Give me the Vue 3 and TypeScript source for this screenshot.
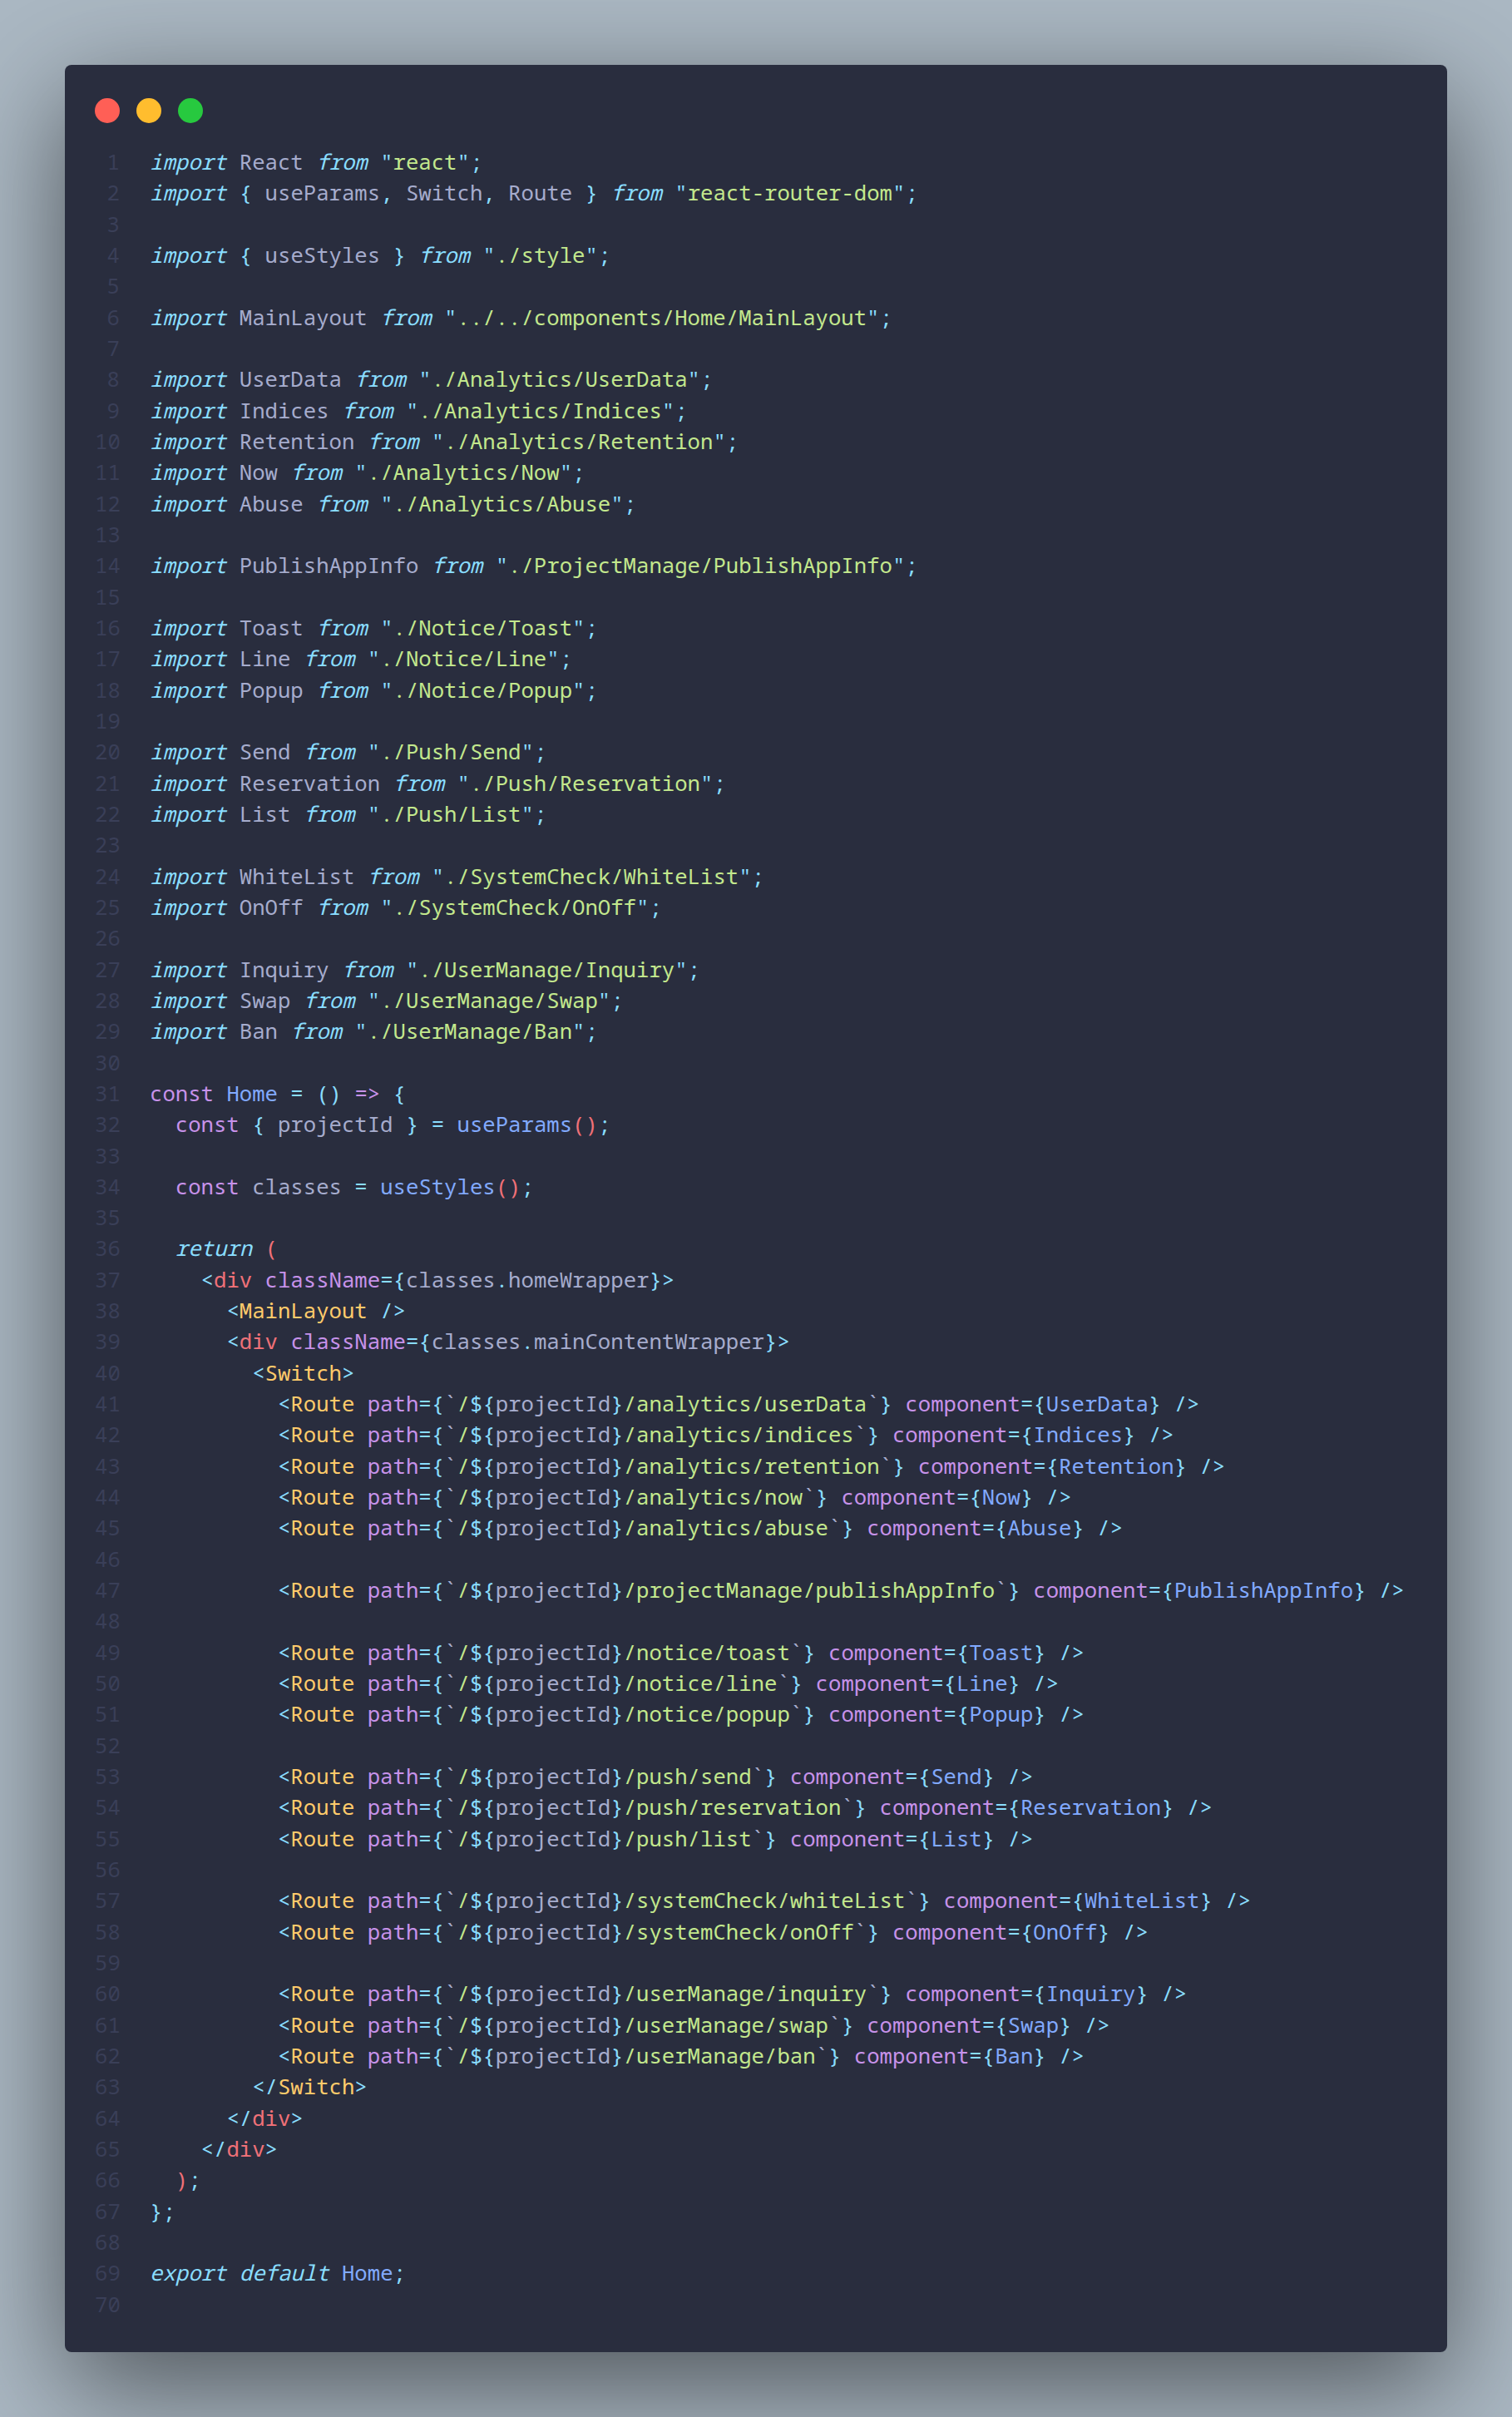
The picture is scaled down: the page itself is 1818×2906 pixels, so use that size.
<script setup lang="ts">
type Tok = [string, string]
type Line = Tok[]

const imp = (name: string, path: string): Line => [
  ['k', 'import'], ['f', ` ${name} `], ['k', 'from'], ['f', ' '], ['c', '"'], ['g', path], ['c', '"'], ['c', ';'],
]
const impBrace = (names: Tok[], path: string): Line => [
  ['k', 'import'], ['f', ' '], ['c', '{'], ['f', ' '], ...names, ['f', ' '], ['c', '}'], ['f', ' '],
  ['k', 'from'], ['f', ' '], ['c', '"'], ['g', path], ['c', '"'], ['c', ';'],
]
const route = (path: string, comp: string): Line => [
  ['f', '          '], ['c', '<'], ['y', 'Route'], ['f', ' '], ['p', 'path'], ['c', '={'], ['f', '`'], ['g', '/'], ['c', '${'],
  ['f', 'projectId'], ['c', '}'], ['g', path], ['f', '`'], ['c', '}'], ['f', ' '], ['p', 'component'], ['c', '={'], ['b', comp], ['c', '}'],
  ['f', ' '], ['c', '/>'],
]
const blank: Line = []

const lines: Line[] = [
  imp('React', 'react'),
  impBrace([['f', 'useParams'], ['c', ','], ['f', ' Switch'], ['c', ','], ['f', ' Route']], 'react-router-dom'),
  blank,
  impBrace([['f', 'useStyles']], './style'),
  blank,
  imp('MainLayout', '../../components/Home/MainLayout'),
  blank,
  imp('UserData', './Analytics/UserData'),
  imp('Indices', './Analytics/Indices'),
  imp('Retention', './Analytics/Retention'),
  imp('Now', './Analytics/Now'),
  imp('Abuse', './Analytics/Abuse'),
  blank,
  imp('PublishAppInfo', './ProjectManage/PublishAppInfo'),
  blank,
  imp('Toast', './Notice/Toast'),
  imp('Line', './Notice/Line'),
  imp('Popup', './Notice/Popup'),
  blank,
  imp('Send', './Push/Send'),
  imp('Reservation', './Push/Reservation'),
  imp('List', './Push/List'),
  blank,
  imp('WhiteList', './SystemCheck/WhiteList'),
  imp('OnOff', './SystemCheck/OnOff'),
  blank,
  imp('Inquiry', './UserManage/Inquiry'),
  imp('Swap', './UserManage/Swap'),
  imp('Ban', './UserManage/Ban'),
  blank,
  [['p', 'const'], ['f', ' '], ['b', 'Home'], ['f', ' '], ['c', '='], ['f', ' '], ['c', '()'], ['f', ' '], ['p', '=>'], ['f', ' '], ['c', '{']],
  [['f', '  '], ['p', 'const'], ['f', ' '], ['c', '{'], ['f', ' projectId '], ['c', '}'], ['f', ' '], ['c', '='], ['f', ' '], ['b', 'useParams'], ['r', '()'], ['c', ';']],
  blank,
  [['f', '  '], ['p', 'const'], ['f', ' classes '], ['c', '='], ['f', ' '], ['b', 'useStyles'], ['r', '()'], ['c', ';']],
  blank,
  [['f', '  '], ['k', 'return'], ['f', ' '], ['r', '(']],
  [['f', '    '], ['c', '<'], ['r', 'div'], ['f', ' '], ['p', 'className'], ['c', '={'], ['f', 'classes'], ['c', '.'], ['f', 'homeWrapper'], ['c', '}>']],
  [['f', '      '], ['c', '<'], ['y', 'MainLayout'], ['f', ' '], ['c', '/>']],
  [['f', '      '], ['c', '<'], ['r', 'div'], ['f', ' '], ['p', 'className'], ['c', '={'], ['f', 'classes'], ['c', '.'], ['f', 'mainContentWrapper'], ['c', '}>']],
  [['f', '        '], ['c', '<'], ['y', 'Switch'], ['c', '>']],
  route('/analytics/userData', 'UserData'),
  route('/analytics/indices', 'Indices'),
  route('/analytics/retention', 'Retention'),
  route('/analytics/now', 'Now'),
  route('/analytics/abuse', 'Abuse'),
  blank,
  route('/projectManage/publishAppInfo', 'PublishAppInfo'),
  blank,
  route('/notice/toast', 'Toast'),
  route('/notice/line', 'Line'),
  route('/notice/popup', 'Popup'),
  blank,
  route('/push/send', 'Send'),
  route('/push/reservation', 'Reservation'),
  route('/push/list', 'List'),
  blank,
  route('/systemCheck/whiteList', 'WhiteList'),
  route('/systemCheck/onOff', 'OnOff'),
  blank,
  route('/userManage/inquiry', 'Inquiry'),
  route('/userManage/swap', 'Swap'),
  route('/userManage/ban', 'Ban'),
  [['f', '        '], ['c', '</'], ['y', 'Switch'], ['c', '>']],
  [['f', '      '], ['c', '</'], ['r', 'div'], ['c', '>']],
  [['f', '    '], ['c', '</'], ['r', 'div'], ['c', '>']],
  [['f', '  '], ['r', ')'], ['c', ';']],
  [['c', '};']],
  blank,
  [['k', 'export'], ['f', ' '], ['k', 'default'], ['f', ' '], ['b', 'Home'], ['c', ';']],
  blank,
]
</script>

<template>
  <div class="page">
    <div class="window">
      <div class="dots">
        <span class="dot red"></span>
        <span class="dot amber"></span>
        <span class="dot green"></span>
      </div>
      <div class="code">
        <div v-for="(line, i) in lines" :key="i" class="row">
          <span class="num">{{ i + 1 }}</span>
          <span class="text"><span v-for="(t, j) in line" :key="j" :class="t[0]">{{ t[1] }}</span></span>
        </div>
      </div>
    </div>
  </div>
</template>

<style scoped>
.page {
  box-sizing: border-box;
  width: 1818px;
  height: 2906px;
  padding: 78px;
  background: #abb8c3;
  overflow: hidden;
}
.window {
  box-sizing: border-box;
  height: 2750px;
  padding: 40px 36px 38px;
  background: #292d3e;
  border-radius: 8px;
  box-shadow: 0 40px 136px rgba(0, 0, 0, 0.55);
}
.dots {
  display: flex;
  gap: 20px;
  height: 30px;
  margin-bottom: 28px;
}
.dot {
  width: 30px;
  height: 30px;
  border-radius: 50%;
}
.red { background: #ff5f56; }
.amber { background: #ffbd2e; }
.green { background: #27c93f; }
.code {
  font-family: "Noto Sans Mono", "DejaVu Sans Mono", monospace;
  font-size: 25.67px;
  line-height: 37.33px;
  color: #a6accd;
}
.row {
  display: flex;
  height: 37.33px;
  white-space: pre;
}
.num {
  flex: none;
  width: 30px;
  margin-right: 36px;
  text-align: right;
  color: #3a3f58;
}
.f { color: #a6accd; }
.k { color: #89ddff; font-style: italic; }
.c { color: #89ddff; }
.g { color: #c3e88d; }
.p { color: #c792ea; }
.b { color: #82aaff; }
.r { color: #f07178; }
.y { color: #ffcb6b; }
</style>
